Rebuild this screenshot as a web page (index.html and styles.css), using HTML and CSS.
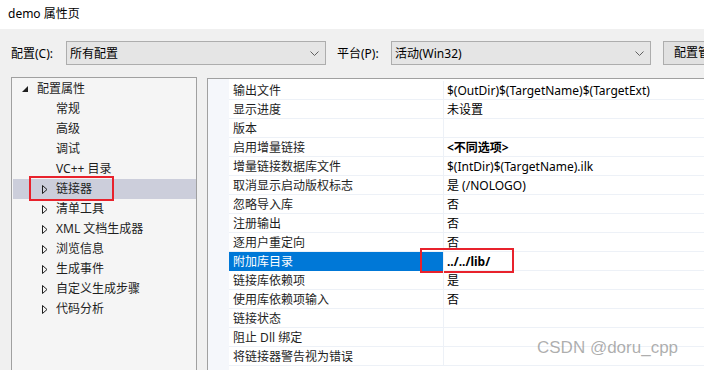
FILE: index.html
```html
<!DOCTYPE html>
<html lang="zh-CN">
<head>
    <meta charset="UTF-8">
    <title>demo 属性页</title>
    <link rel="stylesheet" href="styles.css">
</head>
<body>
    <div class="titlebar">demo 属性页</div>

    <div class="window">
        <div class="toolbar">
            <span class="tb-label">配置(C):</span>
            <div class="combo combo-config">
                <span>所有配置</span>
                <svg class="chev" width="9" height="5" viewBox="0 0 9 5"><polyline points="0.5,0.5 4.5,4.5 8.5,0.5" fill="none" stroke="#606060" stroke-width="1"/></svg>
            </div>
            <span class="tb-label tb-platform">平台(P):</span>
            <div class="combo combo-platform">
                <span>活动(Win32)</span>
                <svg class="chev" width="9" height="5" viewBox="0 0 9 5"><polyline points="0.5,0.5 4.5,4.5 8.5,0.5" fill="none" stroke="#606060" stroke-width="1"/></svg>
            </div>
            <div class="btn">配置管理器(O)...</div>
        </div>

        <div class="panels">
            <div class="tree">
                <div class="node root">
                    <svg class="exp" width="6" height="6" viewBox="0 0 6 6"><polygon points="6,0 6,6 0,6" fill="#1e1e1e"/></svg>
                    <span>配置属性</span>
                </div>
                <div class="node leaf">常规</div>
                <div class="node leaf">高级</div>
                <div class="node leaf">调试</div>
                <div class="node leaf">VC++ 目录</div>
                <div class="node branch selected">
                    <svg class="col" width="6" height="9" viewBox="0 0 6 9"><polygon points="0.5,0.5 5,4.5 0.5,8.5" fill="none" stroke="#1e1e1e" stroke-width="1"/></svg>
                    <span>链接器</span>
                    <div class="mark mark-tree"></div>
                </div>
                <div class="node branch">
                    <svg class="col" width="6" height="9" viewBox="0 0 6 9"><polygon points="0.5,0.5 5,4.5 0.5,8.5" fill="none" stroke="#1e1e1e" stroke-width="1"/></svg>
                    <span>清单工具</span>
                </div>
                <div class="node branch">
                    <svg class="col" width="6" height="9" viewBox="0 0 6 9"><polygon points="0.5,0.5 5,4.5 0.5,8.5" fill="none" stroke="#1e1e1e" stroke-width="1"/></svg>
                    <span>XML 文档生成器</span>
                </div>
                <div class="node branch">
                    <svg class="col" width="6" height="9" viewBox="0 0 6 9"><polygon points="0.5,0.5 5,4.5 0.5,8.5" fill="none" stroke="#1e1e1e" stroke-width="1"/></svg>
                    <span>浏览信息</span>
                </div>
                <div class="node branch">
                    <svg class="col" width="6" height="9" viewBox="0 0 6 9"><polygon points="0.5,0.5 5,4.5 0.5,8.5" fill="none" stroke="#1e1e1e" stroke-width="1"/></svg>
                    <span>生成事件</span>
                </div>
                <div class="node branch">
                    <svg class="col" width="6" height="9" viewBox="0 0 6 9"><polygon points="0.5,0.5 5,4.5 0.5,8.5" fill="none" stroke="#1e1e1e" stroke-width="1"/></svg>
                    <span>自定义生成步骤</span>
                </div>
                <div class="node branch">
                    <svg class="col" width="6" height="9" viewBox="0 0 6 9"><polygon points="0.5,0.5 5,4.5 0.5,8.5" fill="none" stroke="#1e1e1e" stroke-width="1"/></svg>
                    <span>代码分析</span>
                </div>
            </div>

            <div class="grid">
                <div class="row"><div class="gut"></div><div class="name">输出文件</div><div class="val">$(OutDir)$(TargetName)$(TargetExt)</div></div>
                <div class="row"><div class="gut"></div><div class="name">显示进度</div><div class="val">未设置</div></div>
                <div class="row"><div class="gut"></div><div class="name">版本</div><div class="val"></div></div>
                <div class="row"><div class="gut"></div><div class="name">启用增量链接</div><div class="val bold">&lt;不同选项&gt;</div></div>
                <div class="row"><div class="gut"></div><div class="name">增量链接数据库文件</div><div class="val">$(IntDir)$(TargetName).ilk</div></div>
                <div class="row"><div class="gut"></div><div class="name">取消显示启动版权标志</div><div class="val">是 (/NOLOGO)</div></div>
                <div class="row"><div class="gut"></div><div class="name">忽略导入库</div><div class="val">否</div></div>
                <div class="row"><div class="gut"></div><div class="name">注册输出</div><div class="val">否</div></div>
                <div class="row"><div class="gut"></div><div class="name">逐用户重定向</div><div class="val">否</div></div>
                <div class="row active"><div class="gut"></div><div class="name">附加库目录</div><div class="val bold">../../lib/<div class="mark mark-val"></div></div></div>
                <div class="row"><div class="gut"></div><div class="name">链接库依赖项</div><div class="val">是</div></div>
                <div class="row"><div class="gut"></div><div class="name">使用库依赖项输入</div><div class="val">否</div></div>
                <div class="row"><div class="gut"></div><div class="name">链接状态</div><div class="val"></div></div>
                <div class="row"><div class="gut"></div><div class="name">阻止 Dll 绑定</div><div class="val"></div></div>
                <div class="row"><div class="gut"></div><div class="name">将链接器警告视为错误</div><div class="val"></div></div>
            </div>
        </div>
    </div>

    <div class="watermark">CSDN @doru_cpp</div>
</body>
</html>
```

FILE: styles.css
```css
body {
    margin: 0;
    width: 704px;
    height: 370px;
    overflow: hidden;
    font-family: "Noto Sans", "Noto Sans CJK SC", sans-serif;
    font-size: 12px;
    color: #1e1e1e;
    background-color: #f0f0f0;
    position: relative;
}
.titlebar {
    height: 29px;
    line-height: 28px;
    padding-left: 8px;
    background-color: #fff;
    color: #000;
}
.window {
    background-color: #f0f0f0;
}
.toolbar {
    display: flex;
    align-items: center;
    height: 24px;
    margin-top: 12px;
    padding-left: 11px;
    white-space: nowrap;
    overflow: hidden;
}
.toolbar > * {
    flex: none;
}
.tb-label {
    width: 55px;
    color: #000;
}
.tb-platform {
    width: 54px;
    margin-left: 11px;
}
.combo {
    box-sizing: border-box;
    height: 24px;
    border: 1px solid #adadad;
    background-color: #e5e5e5;
    display: flex;
    align-items: center;
    justify-content: space-between;
    padding: 0 6px 0 3px;
    color: #000;
}
.combo-config {
    width: 260px;
}
.combo-platform {
    width: 260px;
}
.chev {
    display: block;
}
.btn {
    box-sizing: border-box;
    height: 24px;
    margin-left: 12px;
    padding: 0 10px;
    border: 1px solid #adadad;
    background-color: #e1e1e1;
    line-height: 22px;
    color: #000;
}
.panels {
    display: flex;
    align-items: flex-start;
    margin-top: 12px;
    padding-left: 11px;
}
.tree {
    box-sizing: border-box;
    width: 186px;
    height: 300px;
    flex: none;
    border: 1px solid #a0a0a0;
    background-color: #f5f5f5;
    padding: 1px 0 0 1px;
}
.node {
    position: relative;
    height: 20px;
    line-height: 20px;
    display: flex;
    align-items: center;
    white-space: nowrap;
}
.node.root {
    padding-left: 9px;
}
.node.root .exp {
    margin-right: 9px;
}
.node.leaf {
    padding-left: 43px;
}
.node.branch {
    padding-left: 29px;
}
.node.branch .col {
    margin-right: 8px;
}
.node.selected {
    background-color: #cccedb;
}
.mark {
    position: absolute;
    box-sizing: border-box;
    border: 2px solid #e8222c;
}
.mark-tree {
    left: 16px;
    top: -3px;
    width: 85px;
    height: 25px;
}
.grid {
    box-sizing: border-box;
    flex: 1;
    height: 300px;
    margin-left: 10px;
    margin-top: 1px;
    border-top: 1px solid #a0a0a0;
    border-left: 1px solid #a0a0a0;
    background-color: #fff;
    padding-top: 2px;
    background-image: linear-gradient(#f5f7fb, #f5f7fb);
    background-size: 21px 100%;
    background-repeat: no-repeat;
}
.row {
    display: flex;
    height: 19px;
}
.gut {
    width: 21px;
    flex: none;
    background-color: #f5f7fb;
}
.name {
    box-sizing: border-box;
    width: 214px;
    flex: none;
    padding-left: 4px;
    line-height: 19px;
    border-bottom: 1px solid #edf1f7;
    white-space: nowrap;
}
.val {
    position: relative;
    box-sizing: border-box;
    flex: 1;
    padding-left: 3px;
    line-height: 19px;
    border-left: 1px solid #edf1f7;
    border-bottom: 1px solid #edf1f7;
    color: #000;
    white-space: nowrap;
}
.bold {
    font-weight: bold;
}
.row.active .name {
    background-color: #0078d7;
    color: #fff;
    border-bottom-color: #0078d7;
}
.mark-val {
    left: -24px;
    top: -4px;
    width: 94px;
    height: 25px;
}
.watermark {
    position: absolute;
    left: 537px;
    top: 338px;
    font-family: "Liberation Sans", sans-serif;
    font-size: 17px;
    color: rgba(120, 120, 120, 0.6);
}
```
